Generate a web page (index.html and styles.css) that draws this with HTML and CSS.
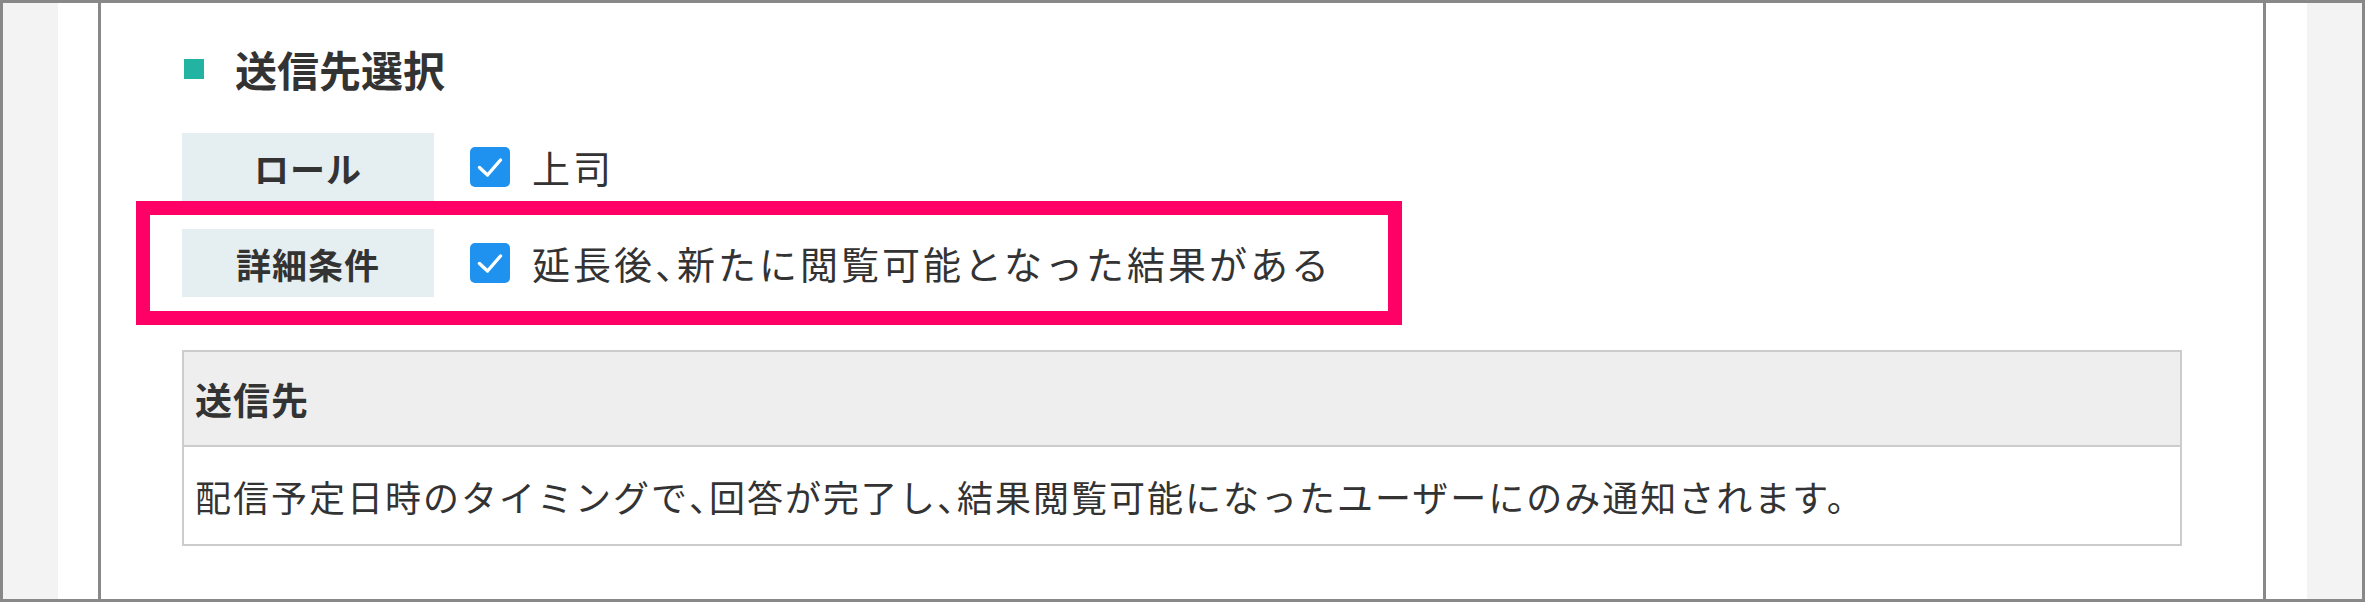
FILE: index.html
```html
<!DOCTYPE html>
<html lang="ja">
<head>
<meta charset="utf-8">
<title>送信先選択</title>
<link rel="stylesheet" href="styles.css">
</head>
<body>
<div class="frame">
  <div class="side"></div>
  <div class="gutter"></div>
  <main class="main">
    <h2 class="heading"><span class="mark"></span>送信先選択</h2>
    <div class="row">
      <div class="label">ロール</div>
      <div class="opt">
        <span class="cb"><svg viewBox="0 0 40 40" width="40" height="40"><path d="M9.5 20.5 L17.5 28 L30.5 13" fill="none" stroke="#fff" stroke-width="3.4" stroke-linecap="round" stroke-linejoin="round"/></svg></span>
        <span class="opt-text">上司</span>
      </div>
    </div>
    <div class="highlight">
      <div class="row">
        <div class="label">詳細条件</div>
        <div class="opt">
          <span class="cb"><svg viewBox="0 0 40 40" width="40" height="40"><path d="M9.5 20.5 L17.5 28 L30.5 13" fill="none" stroke="#fff" stroke-width="3.4" stroke-linecap="round" stroke-linejoin="round"/></svg></span>
          <span class="opt-text">延長後<span class="halt">、</span>新たに閲覧可能となった結果がある</span>
        </div>
      </div>
    </div>
    <div class="info">
      <div class="info-head">送信先</div>
      <div class="info-body">配信予定日時のタイミングで<span class="halt">、</span>回答が完了し<span class="halt">、</span>結果閲覧可能になったユーザーにのみ通知されます。</div>
    </div>
  </main>
  <div class="gutter gutter-r"></div>
  <div class="side"></div>
</div>
</body>
</html>
```
FILE: styles.css
```css
html, body {
  margin: 0;
  padding: 0;
  background: #fff;
}
body {
  font-family: "Noto Sans CJK JP", "Noto Sans", sans-serif;
  color: #333;
}
.frame {
  box-sizing: border-box;
  width: 2365px;
  height: 602px;
  border: 3px solid #888;
  display: flex;
  overflow: hidden;
}
.side {
  width: 55px;
  background: #f3f3f3;
  flex: none;
}
.gutter {
  width: 40px;
  flex: none;
  background: #fff;
}
.gutter-r {
  width: 41px;
}
.main {
  flex: 1;
  border-left: 3px solid #888;
  border-right: 3px solid #888;
  padding: 39px 81px 0 81px;
}
.heading {
  margin: 0;
  display: flex;
  align-items: center;
  height: 54px;
  font-size: 42px;
  font-weight: 700;
  line-height: 54px;
  color: #333;
}
.mark {
  width: 20px;
  height: 20px;
  background: #22b3a3;
  margin-left: 2px;
  margin-right: 31px;
  flex: none;
}
.row {
  display: flex;
  align-items: center;
}
.main > .row {
  margin-top: 37px;
}
.label {
  width: 252px;
  height: 68px;
  background: #e5eef0;
  display: flex;
  align-items: center;
  justify-content: center;
  font-size: 35px;
  font-weight: 700;
  letter-spacing: 1px;
  color: #333;
  flex: none;
}
.opt {
  display: flex;
  align-items: center;
  margin-left: 36px;
}
.cb {
  width: 40px;
  height: 40px;
  border-radius: 5px;
  background: #1f92ef;
  display: flex;
  flex: none;
}
.opt-text {
  margin-left: 22px;
  font-size: 38px;
  letter-spacing: 3px;
  color: #333;
  line-height: 1.2;
}
.halt {
  font-feature-settings: "halt";
}
.highlight {
  box-sizing: border-box;
  width: 1266px;
  margin-left: -46px;
  border: 14px solid #ff0066;
  padding: 14px 32px;
}
.info {
  margin-top: 25px;
  border: 2px solid #ccc;
}
.info-head {
  height: 93px;
  background: #eee;
  border-bottom: 2px solid #ccc;
  display: flex;
  align-items: center;
  padding: 0 11px;
  font-size: 37px;
  font-weight: 700;
  letter-spacing: 1px;
}
.info-body {
  height: 97px;
  display: flex;
  align-items: center;
  padding: 0 11px;
  font-size: 36px;
  letter-spacing: 2px;
}
```
